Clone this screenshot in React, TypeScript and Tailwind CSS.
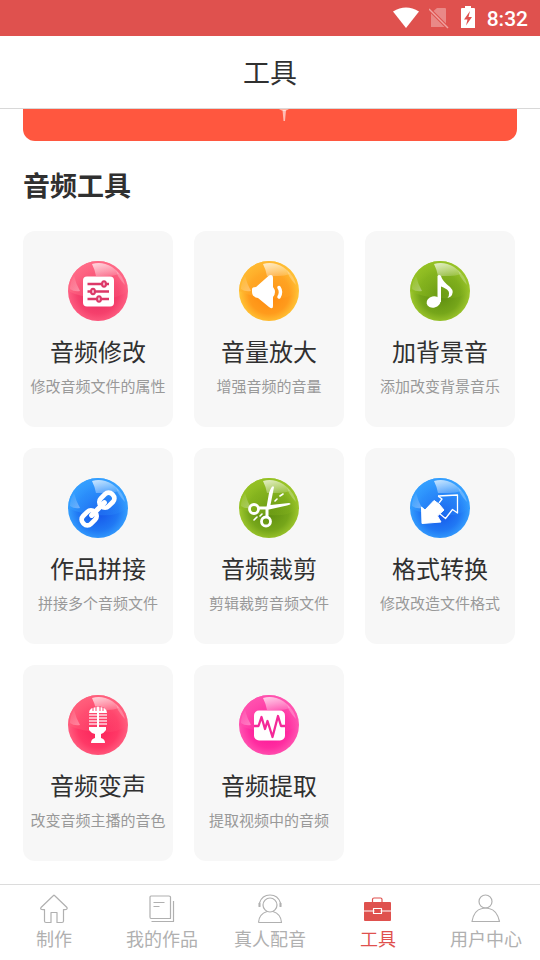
import { useId, type ReactNode } from 'react';

type Palette = { light: string; mid: string; dark: string; rim: string };

const rose: Palette = { light: '#ff6c86', mid: '#f5406c', dark: '#e42a60', rim: '#ff6486' };
const orange: Palette = { light: '#ffb02c', mid: '#ff9b1c', dark: '#ff860c', rim: '#ffcc3c' };
const green: Palette = { light: '#8ebc20', mid: '#76a61a', dark: '#5a8a0e', rim: '#a4cc30' };
const blue: Palette = { light: '#329cff', mid: '#2078f4', dark: '#1450e8', rim: '#38a4ff' };
const red: Palette = { light: '#ff5c78', mid: '#ff3866', dark: '#fa2058', rim: '#ff6484' };
const magenta: Palette = { light: '#ff4cac', mid: '#ff2ca0', dark: '#f80c94', rim: '#ff5cb4' };

function Orb({ palette, children }: { palette: Palette; children: ReactNode }) {
  const id = useId();
  return (
    <svg viewBox="0 0 60 60" className="size-[60px] shrink-0" aria-hidden="true">
      <defs>
        <radialGradient id={`${id}b`} cx="50%" cy="54%" r="52%">
          <stop offset="0" stopColor={palette.dark} />
          <stop offset=".65" stopColor={palette.mid} />
          <stop offset="1" stopColor={palette.rim} />
        </radialGradient>
        <linearGradient id={`${id}t`} x1="0" y1="0" x2="1" y2="1">
          <stop offset="0" stopColor={palette.light} stopOpacity=".9" />
          <stop offset="1" stopColor={palette.light} stopOpacity=".1" />
        </linearGradient>
        <linearGradient id={`${id}h`} x1="0" y1="0" x2=".6" y2="1">
          <stop offset="0" stopColor="#fff" stopOpacity=".75" />
          <stop offset="1" stopColor="#fff" stopOpacity=".2" />
        </linearGradient>
        <linearGradient id={`${id}l`} x1="0" y1="0" x2="1" y2="1">
          <stop offset="0" stopColor="#fff" stopOpacity="0" />
          <stop offset="1" stopColor="#fff" stopOpacity=".35" />
        </linearGradient>
      </defs>
      <circle cx="30" cy="30" r="30" fill={`url(#${id}b)`} />
      <path d="M0 30A30 30 0 0 1 60 30Q48 39 30 37Q12 36 0 30Z" fill={`url(#${id}t)`} />
      <path d="M24 3Q34 0 44 6Q49 9 51 13Q45 15 40 15H28Q27 9 24 3Z" fill={`url(#${id}h)`} />
      <path d="M48 9Q55 15 57 24Q53 20 50 15Z" fill="#fff" opacity=".25" />
      <path d="M6 15Q2 21 2 28Q6 31 12 30Q8 23 6 15Z" fill={`url(#${id}l)`} />
      {children}
    </svg>
  );
}

const tools = [
  {
    title: '音频修改',
    note: '修改音频文件的属性',
    icon: (
      <Orb palette={rose}>
        <rect x="15" y="15.500" width="31" height="30" rx="4" fill="#fff" />
        <g stroke="#dc3868" strokeWidth="2.500">
          <path d="M19.500 23H41M19.500 30.500H41M19.500 38H41" />
          <ellipse cx="36" cy="23" rx="2" ry="2.800" fill="#f6bdcf" strokeWidth="2" />
          <ellipse cx="25" cy="30.500" rx="2" ry="2.800" fill="#f6bdcf" strokeWidth="2" />
          <ellipse cx="31" cy="38" rx="2" ry="2.800" fill="#f6bdcf" strokeWidth="2" />
        </g>
      </Orb>
    ),
  },
  {
    title: '音量放大',
    note: '增强音频的音量',
    icon: (
      <Orb palette={orange}>
        <path d="M13 28Q13 26 17 26L30 14.500Q34 13 34 17V26Q38 31 34 36V45Q34 49 30 46L19 37Q13 36 13 31Z" fill="#fff" />
        <path d="M40 26.500Q43 31 40 36" fill="none" stroke="#fff" strokeWidth="3.500" strokeLinecap="round" />
      </Orb>
    ),
  },
  {
    title: '加背景音',
    note: '添加改变背景音乐',
    icon: (
      <Orb palette={green}>
        <ellipse cx="23.500" cy="41" rx="7" ry="5.600" transform="rotate(-12 23.500 41)" fill="#fff" />
        <path d="M27.500 15Q29 13 31 15Q32 19 37 23.500Q45 29 42 34Q41 36 37.500 37Q41 32 37 28.500Q33 26 31 25.500V41H27.500Z" fill="#fff" />
      </Orb>
    ),
  },
  {
    title: '作品拼接',
    note: '拼接多个音频文件',
    icon: (
      <Orb palette={blue}>
        <g transform="rotate(-45 30 31)" fill="none" stroke="#fff" strokeWidth="4.800">
          <rect x="9.500" y="25.500" width="16" height="11" rx="5" />
          <rect x="34.500" y="25.500" width="16" height="11" rx="5" />
          <path d="M21 31H39" strokeWidth="5" strokeLinecap="round" />
        </g>
      </Orb>
    ),
  },
  {
    title: '音频裁剪',
    note: '剪辑裁剪音频文件',
    icon: (
      <Orb palette={green}>
        <g fill="none" stroke="#fff">
          <circle cx="15" cy="31" r="4.500" strokeWidth="2.800" />
          <circle cx="27" cy="43.500" r="4.500" strokeWidth="2.800" />
          <path d="M19 30L28 30M28 31L28 39" strokeWidth="3" />
          <path d="M36 23L38 21M41 18L44 16M23 36L21 38M18 39L15 42" strokeWidth="1.600" strokeLinecap="round" />
        </g>
        <path d="M27 32L30 15Q33 6 35 9L31.500 27L50 25Q54 26 48 27.500L30 31.500Z" fill="#fff" />
      </Orb>
    ),
  },
  {
    title: '格式转换',
    note: '修改改造文件格式',
    icon: (
      <Orb palette={blue}>
        <path d="M28 18L47.500 17V35L42.500 31.500L35.500 40.500L30 36M28 18L32 21L29 25" fill="none" stroke="#fff" strokeWidth="1.300" strokeLinejoin="round" />
        <path d="M11.500 29L15 32L24 22.500L29 26L34 32L27.500 38L31 44L12 45.500Z" fill="#fff" stroke="#fff" strokeLinejoin="round" />
      </Orb>
    ),
  },
  {
    title: '音频变声',
    note: '改变音频主播的音色',
    icon: (
      <Orb palette={red}>
        <path d="M21 18Q21 12 30 12Q39 12 39 18Z" fill="#fff" />
        <path d="M25 12V16M28 11V16M32 11V16M35 12V16" stroke="#fa4870" />
        <path d="M21 20H39M21 23H39M21 26H39M21 29H39" stroke="#fff" strokeWidth="1.400" opacity=".8" />
        <path d="M30 17V34" stroke="#fff" strokeWidth="2" />
        <path d="M21 32H38V35Q36 38 33 39V43Q37 44 37 48H23Q23 44 27 43V39Q23 38 21 35Z" fill="#fff" />
      </Orb>
    ),
  },
  {
    title: '音频提取',
    note: '提取视频中的音频',
    icon: (
      <Orb palette={magenta}>
        <rect x="15" y="15.500" width="31" height="30" rx="5" fill="#fff" />
        <path d="M15 31H19.500L22.500 22L26 34L28.500 26L33.500 42L39 21L42 31H46" fill="none" stroke="#f42898" strokeWidth="2.300" strokeLinejoin="round" />
      </Orb>
    ),
  },
];

const tabs = [
  {
    label: '制作',
    icon: <path d="M3 15.500L15.500 3.500Q16 3 16.500 3.500L29 15.500Q30 18 25.500 17.500V29Q25.500 30.500 24 30.500H19V20.500H13V30.500H8Q6.500 30.500 6.500 29V17.500Q1.500 18 3 15.500Z" />,
  },
  {
    label: '我的作品',
    icon: <path d="M5 4H23Q24.500 4 24.500 5V26.500H5Q4 26.500 4 25V5Q4 4 5 4M7.500 10.500H18.500M7.500 14.500H13.500M27.500 9V29.500H5.500" />,
  },
  {
    label: '真人配音',
    icon: (
      <>
        <circle cx="16" cy="13" r="7" />
        <path d="M4.500 30.500Q5 22 13 19.500M19 19.500Q27 22 27.500 30.500H4.500M5.500 14V11Q8 3 16 3Q24 3 26.500 11V14" />
        <path d="M5.500 11V15M26.500 11V15" strokeWidth="2" />
      </>
    ),
  },
  {
    label: '工具',
    active: true,
    icon: (
      <>
        <rect x="2" y="10" width="27" height="19" rx="1" fill="currentColor" stroke="none" />
        <path d="M10.500 10V7.500Q10.500 6 12 6H18.500Q20 6 20 7.500V10" />
        <path d="M2 19H29M11.500 16.500H19.500V21.500H11.500Z" stroke="#fff" />
        <rect x="12.500" y="17.500" width="6" height="3" fill="currentColor" stroke="none" />
      </>
    ),
  },
  {
    label: '用户中心',
    icon: (
      <>
        <circle cx="15.500" cy="9.500" r="6.500" />
        <path d="M2 29.500Q4 18 12 16.500Q15.500 15.500 19 16.500Q27 18 29.500 29.500Z" />
      </>
    ),
  },
];

export default function App() {
  return (
    <div className="flex min-h-screen flex-col bg-white font-['Noto_Sans_CJK_SC',sans-serif] text-[#303030]">
      <div className="flex h-9 items-center justify-end bg-[#df514e] pr-3 text-white">
        <svg viewBox="0 0 26 22" className="mr-2.5 h-[22px] w-[26px]" fill="currentColor" aria-label="Wi-Fi">
          <path d="M0 4.500Q13-3.500 26 4.500L13 21Z" />
        </svg>
        <svg viewBox="0 0 20 22" className="mr-3 h-[22px] w-5" aria-label="无 SIM 卡">
          <path d="M8 1H16Q17 1 17 2V20H2V6Z" fill="#fff" opacity=".32" />
          <path d="M0 2L19 21" stroke="#df514e" strokeWidth="3.500" />
          <path d="M0 2L19 21" stroke="#f0a3a1" strokeWidth="1.500" />
        </svg>
        <svg viewBox="0 0 14 24" className="mr-3 h-6 w-[14px]" aria-label="充电中">
          <path d="M4 0H10V2H13Q14 2 14 3V22H0V3Q0 2 1 2H4Z" fill="#fff" />
          <path d="M9 5L3 13.500H6.500L5 19.500L11 11H7.500Z" fill="#df514e" />
        </svg>
        <span className="pt-0.5 font-['Roboto',sans-serif] text-[21px] font-medium leading-8">8:32</span>
      </div>

      <header className="flex h-[73px] items-center justify-center border-b border-[#d8d8d8]">
        <h1 className="text-[27px] leading-10">工具</h1>
      </header>

      <main className="flex-1 pb-[23px] pl-[23px] pr-[25px]">
        <div className="-mr-0.5 flex h-8 justify-center rounded-b-xl bg-[#ff573f] pl-7">
          <svg viewBox="0 0 12 14" className="h-3.5 w-3" aria-hidden="true">
            <path d="M1 0Q6 4 11 0Z" fill="#ffb09f" />
            <path d="M4.500 1H8L7 12H5.500Z" fill="#fff" opacity=".6" />
          </svg>
        </div>
        <h2 className="mt-6 text-[27px] font-bold leading-10">音频工具</h2>
        <div className="mt-[26px] grid grid-cols-3 gap-[21px]">
          {tools.map((tool) => (
            <button key={tool.title} type="button" className="flex h-[196px] flex-col items-center rounded-xl bg-[#f7f7f7] pt-[30px]">
              {tool.icon}
              <span className="mt-3 text-2xl leading-9">{tool.title}</span>
              <span className="mt-1.5 whitespace-nowrap text-[15px] leading-[22px] text-[#999]">{tool.note}</span>
            </button>
          ))}
        </div>
      </main>

      <nav className="grid h-[76px] grid-cols-5 border-t border-[#dcdcdc]">
        {tabs.map((tab) => (
          <a
            key={tab.label}
            href="#"
            aria-current={tab.active ? 'page' : undefined}
            className={`flex flex-col items-center pt-[7px] ${tab.active ? 'text-[#df514e]' : 'text-[#b0b0b0]'}`}
          >
            <svg viewBox="0 0 32 32" className="size-8" fill="none" stroke="currentColor" strokeWidth="1.200" strokeLinejoin="round" aria-hidden="true">
              {tab.icon}
            </svg>
            <span className="whitespace-nowrap text-lg leading-7">{tab.label}</span>
          </a>
        ))}
      </nav>
    </div>
  );
}
